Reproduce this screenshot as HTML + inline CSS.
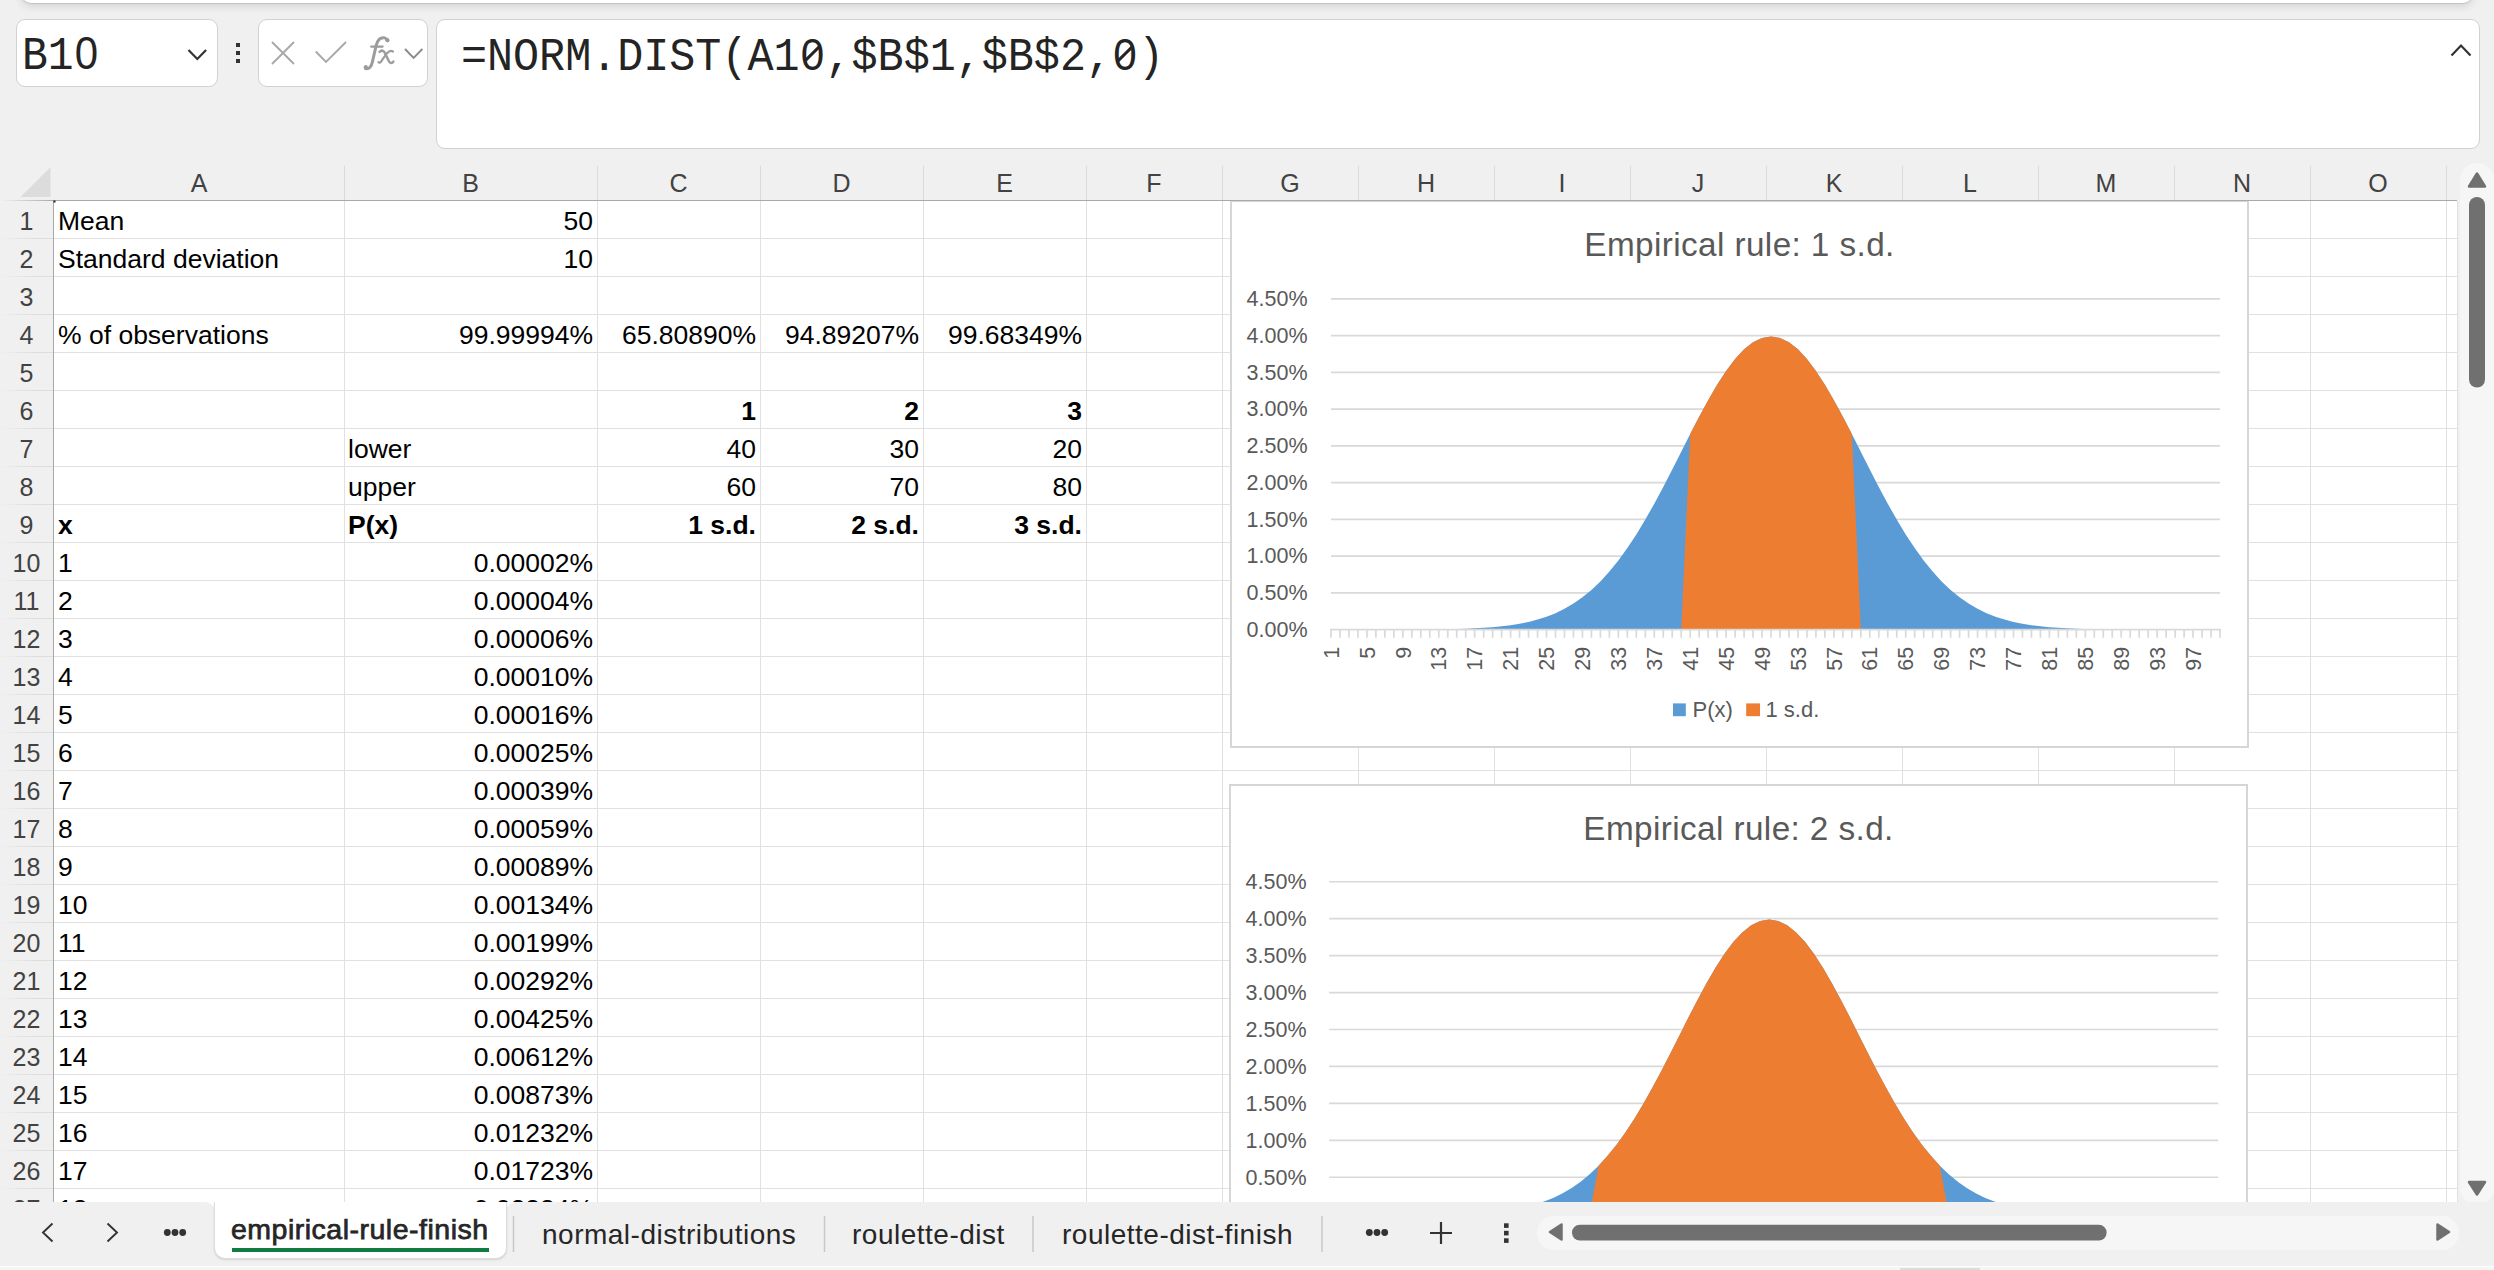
<!DOCTYPE html><html><head><meta charset="utf-8"><style>
*{margin:0;padding:0;box-sizing:border-box}
html,body{width:2494px;height:1270px;overflow:hidden;background:#f0f0f0}
body{position:relative;font-family:"Liberation Sans",sans-serif}
.a{position:absolute}
.c{position:absolute;font-size:26.5px;line-height:38px;height:38px;padding-top:1px;color:#000;white-space:nowrap}
.l{text-align:left}
.r{text-align:right}
.b{font-weight:bold}
.ch{position:absolute;top:158px;height:50px;line-height:50px;font-size:25px;color:#424242;text-align:center}
.rh{position:absolute;left:0;width:53px;height:38px;line-height:38px;padding-top:1px;font-size:25px;color:#424242;text-align:center}
.tab{position:absolute;top:1202px;height:56px;line-height:56px;font-size:28px;color:#262626;white-space:nowrap}
</style></head><body>

<div class="a" style="left:21px;top:-30px;width:2452px;height:32.6px;background:#fff;border-radius:10px;box-shadow:0 1px 1px #c4c4c4,0 3px 10px rgba(0,0,0,.13)"></div>
<div class="a" style="left:16px;top:19px;width:202px;height:68px;background:#fff;border:1px solid #d1d1d1;border-radius:9px"></div>
<div class="a" style="left:22px;top:26px;font-family:'Liberation Mono',monospace;font-size:43px;line-height:56px;color:#242424;transform:scaleY(1.08);transform-origin:0 50%">B1<span style="font-family:'Liberation Sans';font-size:42px;display:inline-block;width:25.8px;text-align:center">0</span></div>
<svg class="a" style="left:0;top:0" width="440" height="100"><path d="M188.5 50 L197.3 59 L206.1 50" fill="none" stroke="#333" stroke-width="2.2"/><rect x="236" y="43" width="4" height="4" fill="#333"/><rect x="236" y="51" width="4" height="4" fill="#333"/><rect x="236" y="59" width="4" height="4" fill="#333"/></svg>
<div class="a" style="left:258px;top:19px;width:170px;height:68px;background:#fff;border:1px solid #d1d1d1;border-radius:9px"></div>
<svg class="a" style="left:0;top:0" width="440" height="100"><path d="M272 42 L294 64 M294 42 L272 64" stroke="#a8a8a8" stroke-width="1.9" fill="none"/><path d="M315.8 51.5 L326 62 L346 42" stroke="#a8a8a8" stroke-width="1.9" fill="none"/><path d="M405 49 L413.6 58 L422.4 49" stroke="#8a8a8a" stroke-width="1.9" fill="none"/><g fill="none" stroke="#9c9c9c" stroke-linecap="round"><path d="M387.6 40.8 C386.8 37.6 383.2 36.9 380.2 38.6 C377.2 40.6 376.4 44 375.6 48 L372.2 62.6 C371.2 66.8 368.6 69.2 365.4 68.6" stroke-width="3"/><path d="M371.2 46.6 H382.6" stroke-width="2.3"/><path d="M379.6 51.8 C382 49.6 384 50.6 385.4 54 L388.8 61 C390.2 63.6 392 63.6 393.4 61.6" stroke-width="2.5"/><path d="M393 51.6 C391 50 389 51 387 53.2 L382 60.2 C380.6 62.6 379.6 63 378.4 62.2" stroke-width="2.2"/></g><circle cx="387.4" cy="40.2" r="2.1" fill="#9c9c9c"/><circle cx="365.8" cy="67.2" r="2.1" fill="#9c9c9c"/></svg>
<div class="a" style="left:436px;top:19px;width:2044px;height:130px;background:#fff;border:1px solid #d1d1d1;border-radius:9px"></div>
<div class="a" style="left:461px;top:26.5px;font-family:'Liberation Mono',monospace;font-size:43.4px;line-height:56px;color:#242424;white-space:pre;transform:scaleY(1.06);transform-origin:0 50%">=NORM.DIST(A1<span style="display:inline-block;width:26.04px;position:relative;text-align:center;font-family:'Liberation Sans';font-size:42.2px">0<span style="position:absolute;left:11.8px;top:15.5px;width:2.6px;height:21px;background:#242424;transform:rotate(47deg)"></span></span>,$B$1,$B$2,<span style="display:inline-block;width:26.04px;position:relative;text-align:center;font-family:'Liberation Sans';font-size:42.2px">0<span style="position:absolute;left:11.8px;top:15.5px;width:2.6px;height:21px;background:#242424;transform:rotate(47deg)"></span></span>)</div>
<svg class="a" style="left:2430px;top:30px" width="50" height="40"><path d="M21.5 25.5 L31 15.5 L40.5 25.5" fill="none" stroke="#333" stroke-width="2.2"/></svg>
<div class="a" style="left:54px;top:201px;width:2403px;height:1001px;background:#fff"></div>
<svg class="a" style="left:0;top:0" width="2494" height="1202"><line x1="54" y1="238.5" x2="2457" y2="238.5" stroke="#e1e1e1" stroke-width="1"/><line x1="54" y1="276.5" x2="2457" y2="276.5" stroke="#e1e1e1" stroke-width="1"/><line x1="54" y1="314.5" x2="2457" y2="314.5" stroke="#e1e1e1" stroke-width="1"/><line x1="54" y1="352.5" x2="2457" y2="352.5" stroke="#e1e1e1" stroke-width="1"/><line x1="54" y1="390.5" x2="2457" y2="390.5" stroke="#e1e1e1" stroke-width="1"/><line x1="54" y1="428.5" x2="2457" y2="428.5" stroke="#e1e1e1" stroke-width="1"/><line x1="54" y1="466.5" x2="2457" y2="466.5" stroke="#e1e1e1" stroke-width="1"/><line x1="54" y1="504.5" x2="2457" y2="504.5" stroke="#e1e1e1" stroke-width="1"/><line x1="54" y1="542.5" x2="2457" y2="542.5" stroke="#e1e1e1" stroke-width="1"/><line x1="54" y1="580.5" x2="2457" y2="580.5" stroke="#e1e1e1" stroke-width="1"/><line x1="54" y1="618.5" x2="2457" y2="618.5" stroke="#e1e1e1" stroke-width="1"/><line x1="54" y1="656.5" x2="2457" y2="656.5" stroke="#e1e1e1" stroke-width="1"/><line x1="54" y1="694.5" x2="2457" y2="694.5" stroke="#e1e1e1" stroke-width="1"/><line x1="54" y1="732.5" x2="2457" y2="732.5" stroke="#e1e1e1" stroke-width="1"/><line x1="54" y1="770.5" x2="2457" y2="770.5" stroke="#e1e1e1" stroke-width="1"/><line x1="54" y1="808.5" x2="2457" y2="808.5" stroke="#e1e1e1" stroke-width="1"/><line x1="54" y1="846.5" x2="2457" y2="846.5" stroke="#e1e1e1" stroke-width="1"/><line x1="54" y1="884.5" x2="2457" y2="884.5" stroke="#e1e1e1" stroke-width="1"/><line x1="54" y1="922.5" x2="2457" y2="922.5" stroke="#e1e1e1" stroke-width="1"/><line x1="54" y1="960.5" x2="2457" y2="960.5" stroke="#e1e1e1" stroke-width="1"/><line x1="54" y1="998.5" x2="2457" y2="998.5" stroke="#e1e1e1" stroke-width="1"/><line x1="54" y1="1036.5" x2="2457" y2="1036.5" stroke="#e1e1e1" stroke-width="1"/><line x1="54" y1="1074.5" x2="2457" y2="1074.5" stroke="#e1e1e1" stroke-width="1"/><line x1="54" y1="1112.5" x2="2457" y2="1112.5" stroke="#e1e1e1" stroke-width="1"/><line x1="54" y1="1150.5" x2="2457" y2="1150.5" stroke="#e1e1e1" stroke-width="1"/><line x1="54" y1="1188.5" x2="2457" y2="1188.5" stroke="#e1e1e1" stroke-width="1"/><line x1="54" y1="1226.5" x2="2457" y2="1226.5" stroke="#e1e1e1" stroke-width="1"/><line x1="344.5" y1="201" x2="344.5" y2="1202" stroke="#e1e1e1" stroke-width="1"/><line x1="597.5" y1="201" x2="597.5" y2="1202" stroke="#e1e1e1" stroke-width="1"/><line x1="760.5" y1="201" x2="760.5" y2="1202" stroke="#e1e1e1" stroke-width="1"/><line x1="923.5" y1="201" x2="923.5" y2="1202" stroke="#e1e1e1" stroke-width="1"/><line x1="1086.5" y1="201" x2="1086.5" y2="1202" stroke="#e1e1e1" stroke-width="1"/><line x1="1222.5" y1="201" x2="1222.5" y2="1202" stroke="#e1e1e1" stroke-width="1"/><line x1="1358.5" y1="201" x2="1358.5" y2="1202" stroke="#e1e1e1" stroke-width="1"/><line x1="1494.5" y1="201" x2="1494.5" y2="1202" stroke="#e1e1e1" stroke-width="1"/><line x1="1630.5" y1="201" x2="1630.5" y2="1202" stroke="#e1e1e1" stroke-width="1"/><line x1="1766.5" y1="201" x2="1766.5" y2="1202" stroke="#e1e1e1" stroke-width="1"/><line x1="1902.5" y1="201" x2="1902.5" y2="1202" stroke="#e1e1e1" stroke-width="1"/><line x1="2038.5" y1="201" x2="2038.5" y2="1202" stroke="#e1e1e1" stroke-width="1"/><line x1="2174.5" y1="201" x2="2174.5" y2="1202" stroke="#e1e1e1" stroke-width="1"/><line x1="2310.5" y1="201" x2="2310.5" y2="1202" stroke="#e1e1e1" stroke-width="1"/><line x1="2446.5" y1="201" x2="2446.5" y2="1202" stroke="#e1e1e1" stroke-width="1"/><rect x="2457" y="201" width="1" height="1001" fill="#e1e1e1"/></svg>
<div class="c l" style="left:58px;top:201px">Mean</div>
<div class="c r" style="left:344px;width:249px;top:201px">50</div>
<div class="c l" style="left:58px;top:239px">Standard deviation</div>
<div class="c r" style="left:344px;width:249px;top:239px">10</div>
<div class="c l" style="left:58px;top:315px">% of observations</div>
<div class="c r" style="left:344px;width:249px;top:315px">99.99994%</div>
<div class="c r" style="left:597px;width:159px;top:315px">65.80890%</div>
<div class="c r" style="left:760px;width:159px;top:315px">94.89207%</div>
<div class="c r" style="left:923px;width:159px;top:315px">99.68349%</div>
<div class="c r b" style="left:597px;width:159px;top:391px">1</div>
<div class="c r b" style="left:760px;width:159px;top:391px">2</div>
<div class="c r b" style="left:923px;width:159px;top:391px">3</div>
<div class="c l" style="left:348px;top:429px">lower</div>
<div class="c r" style="left:597px;width:159px;top:429px">40</div>
<div class="c r" style="left:760px;width:159px;top:429px">30</div>
<div class="c r" style="left:923px;width:159px;top:429px">20</div>
<div class="c l" style="left:348px;top:467px">upper</div>
<div class="c r" style="left:597px;width:159px;top:467px">60</div>
<div class="c r" style="left:760px;width:159px;top:467px">70</div>
<div class="c r" style="left:923px;width:159px;top:467px">80</div>
<div class="c l b" style="left:58px;top:505px">x</div>
<div class="c l b" style="left:348px;top:505px">P(x)</div>
<div class="c r b" style="left:597px;width:159px;top:505px">1 s.d.</div>
<div class="c r b" style="left:760px;width:159px;top:505px">2 s.d.</div>
<div class="c r b" style="left:923px;width:159px;top:505px">3 s.d.</div>
<div class="c l" style="left:58px;top:543px">1</div>
<div class="c r" style="left:344px;width:249px;top:543px">0.00002%</div>
<div class="c l" style="left:58px;top:581px">2</div>
<div class="c r" style="left:344px;width:249px;top:581px">0.00004%</div>
<div class="c l" style="left:58px;top:619px">3</div>
<div class="c r" style="left:344px;width:249px;top:619px">0.00006%</div>
<div class="c l" style="left:58px;top:657px">4</div>
<div class="c r" style="left:344px;width:249px;top:657px">0.00010%</div>
<div class="c l" style="left:58px;top:695px">5</div>
<div class="c r" style="left:344px;width:249px;top:695px">0.00016%</div>
<div class="c l" style="left:58px;top:733px">6</div>
<div class="c r" style="left:344px;width:249px;top:733px">0.00025%</div>
<div class="c l" style="left:58px;top:771px">7</div>
<div class="c r" style="left:344px;width:249px;top:771px">0.00039%</div>
<div class="c l" style="left:58px;top:809px">8</div>
<div class="c r" style="left:344px;width:249px;top:809px">0.00059%</div>
<div class="c l" style="left:58px;top:847px">9</div>
<div class="c r" style="left:344px;width:249px;top:847px">0.00089%</div>
<div class="c l" style="left:58px;top:885px">10</div>
<div class="c r" style="left:344px;width:249px;top:885px">0.00134%</div>
<div class="c l" style="left:58px;top:923px">11</div>
<div class="c r" style="left:344px;width:249px;top:923px">0.00199%</div>
<div class="c l" style="left:58px;top:961px">12</div>
<div class="c r" style="left:344px;width:249px;top:961px">0.00292%</div>
<div class="c l" style="left:58px;top:999px">13</div>
<div class="c r" style="left:344px;width:249px;top:999px">0.00425%</div>
<div class="c l" style="left:58px;top:1037px">14</div>
<div class="c r" style="left:344px;width:249px;top:1037px">0.00612%</div>
<div class="c l" style="left:58px;top:1075px">15</div>
<div class="c r" style="left:344px;width:249px;top:1075px">0.00873%</div>
<div class="c l" style="left:58px;top:1113px">16</div>
<div class="c r" style="left:344px;width:249px;top:1113px">0.01232%</div>
<div class="c l" style="left:58px;top:1151px">17</div>
<div class="c r" style="left:344px;width:249px;top:1151px">0.01723%</div>
<div class="c l" style="left:58px;top:1189px">18</div>
<div class="c r" style="left:344px;width:249px;top:1189px">0.02384%</div>
<svg class="a" style="left:1230px;top:200px" width="1019" height="548" viewBox="1230 200 1019 548"><rect x="1231" y="201" width="1017" height="546" fill="#fff" stroke="#d6d6d6" stroke-width="2"/><line x1="1331" y1="592.86" x2="2220.0" y2="592.86" stroke="#d9d9d9" stroke-width="1.7"/><line x1="1331" y1="556.12" x2="2220.0" y2="556.12" stroke="#d9d9d9" stroke-width="1.7"/><line x1="1331" y1="519.38" x2="2220.0" y2="519.38" stroke="#d9d9d9" stroke-width="1.7"/><line x1="1331" y1="482.64" x2="2220.0" y2="482.64" stroke="#d9d9d9" stroke-width="1.7"/><line x1="1331" y1="445.90" x2="2220.0" y2="445.90" stroke="#d9d9d9" stroke-width="1.7"/><line x1="1331" y1="409.16" x2="2220.0" y2="409.16" stroke="#d9d9d9" stroke-width="1.7"/><line x1="1331" y1="372.42" x2="2220.0" y2="372.42" stroke="#d9d9d9" stroke-width="1.7"/><line x1="1331" y1="335.68" x2="2220.0" y2="335.68" stroke="#d9d9d9" stroke-width="1.7"/><line x1="1331" y1="298.94" x2="2220.0" y2="298.94" stroke="#d9d9d9" stroke-width="1.7"/><text x="1307.5" y="636.8" text-anchor="end" font-family="Liberation Sans" font-size="21.5" fill="#595959">0.00%</text><text x="1307.5" y="600.1" text-anchor="end" font-family="Liberation Sans" font-size="21.5" fill="#595959">0.50%</text><text x="1307.5" y="563.3" text-anchor="end" font-family="Liberation Sans" font-size="21.5" fill="#595959">1.00%</text><text x="1307.5" y="526.6" text-anchor="end" font-family="Liberation Sans" font-size="21.5" fill="#595959">1.50%</text><text x="1307.5" y="489.8" text-anchor="end" font-family="Liberation Sans" font-size="21.5" fill="#595959">2.00%</text><text x="1307.5" y="453.1" text-anchor="end" font-family="Liberation Sans" font-size="21.5" fill="#595959">2.50%</text><text x="1307.5" y="416.4" text-anchor="end" font-family="Liberation Sans" font-size="21.5" fill="#595959">3.00%</text><text x="1307.5" y="379.6" text-anchor="end" font-family="Liberation Sans" font-size="21.5" fill="#595959">3.50%</text><text x="1307.5" y="342.9" text-anchor="end" font-family="Liberation Sans" font-size="21.5" fill="#595959">4.00%</text><text x="1307.5" y="306.1" text-anchor="end" font-family="Liberation Sans" font-size="21.5" fill="#595959">4.50%</text><polygon points="1331.00,629.6 1331.00,629.60 1339.98,629.60 1348.96,629.60 1357.94,629.59 1366.92,629.59 1375.90,629.58 1384.88,629.57 1393.86,629.56 1402.84,629.53 1411.82,629.50 1420.80,629.45 1429.78,629.39 1438.76,629.29 1447.74,629.15 1456.72,628.96 1465.70,628.69 1474.68,628.33 1483.66,627.85 1492.64,627.20 1501.62,626.34 1510.60,625.23 1519.58,623.78 1528.56,621.94 1537.54,619.62 1546.52,616.72 1555.50,613.14 1564.48,608.79 1573.46,603.53 1582.44,597.28 1591.42,589.93 1600.40,581.39 1609.38,571.59 1618.36,560.49 1627.34,548.10 1636.32,534.43 1645.30,519.58 1654.28,503.68 1663.26,486.91 1672.24,469.52 1681.22,451.80 1690.20,434.08 1699.18,416.73 1708.16,400.16 1717.14,384.75 1726.12,370.90 1735.10,359.00 1744.08,349.36 1753.06,342.26 1762.04,337.92 1771.02,336.46 1780.00,337.92 1788.98,342.26 1797.96,349.36 1806.94,359.00 1815.92,370.90 1824.90,384.75 1833.88,400.16 1842.86,416.73 1851.84,434.08 1860.82,451.80 1869.80,469.52 1878.78,486.91 1887.76,503.68 1896.74,519.58 1905.72,534.43 1914.70,548.10 1923.68,560.49 1932.66,571.59 1941.64,581.39 1950.62,589.93 1959.60,597.28 1968.58,603.53 1977.56,608.79 1986.54,613.14 1995.52,616.72 2004.50,619.62 2013.48,621.94 2022.46,623.78 2031.44,625.23 2040.42,626.34 2049.40,627.20 2058.38,627.85 2067.36,628.33 2076.34,628.69 2085.32,628.96 2094.30,629.15 2103.28,629.29 2112.26,629.39 2121.24,629.45 2130.22,629.50 2139.20,629.53 2148.18,629.56 2157.16,629.57 2166.14,629.58 2175.12,629.59 2184.10,629.59 2193.08,629.60 2202.06,629.60 2211.04,629.60 2220.02,629.60 2220.02,629.6" fill="#5b9bd5"/><polygon points="1331.00,629.6 1331.00,629.60 1339.98,629.60 1348.96,629.60 1357.94,629.60 1366.92,629.60 1375.90,629.60 1384.88,629.60 1393.86,629.60 1402.84,629.60 1411.82,629.60 1420.80,629.60 1429.78,629.60 1438.76,629.60 1447.74,629.60 1456.72,629.60 1465.70,629.60 1474.68,629.60 1483.66,629.60 1492.64,629.60 1501.62,629.60 1510.60,629.60 1519.58,629.60 1528.56,629.60 1537.54,629.60 1546.52,629.60 1555.50,629.60 1564.48,629.60 1573.46,629.60 1582.44,629.60 1591.42,629.60 1600.40,629.60 1609.38,629.60 1618.36,629.60 1627.34,629.60 1636.32,629.60 1645.30,629.60 1654.28,629.60 1663.26,629.60 1672.24,629.60 1681.22,629.60 1690.20,434.08 1699.18,416.73 1708.16,400.16 1717.14,384.75 1726.12,370.90 1735.10,359.00 1744.08,349.36 1753.06,342.26 1762.04,337.92 1771.02,336.46 1780.00,337.92 1788.98,342.26 1797.96,349.36 1806.94,359.00 1815.92,370.90 1824.90,384.75 1833.88,400.16 1842.86,416.73 1851.84,434.08 1860.82,629.60 1869.80,629.60 1878.78,629.60 1887.76,629.60 1896.74,629.60 1905.72,629.60 1914.70,629.60 1923.68,629.60 1932.66,629.60 1941.64,629.60 1950.62,629.60 1959.60,629.60 1968.58,629.60 1977.56,629.60 1986.54,629.60 1995.52,629.60 2004.50,629.60 2013.48,629.60 2022.46,629.60 2031.44,629.60 2040.42,629.60 2049.40,629.60 2058.38,629.60 2067.36,629.60 2076.34,629.60 2085.32,629.60 2094.30,629.60 2103.28,629.60 2112.26,629.60 2121.24,629.60 2130.22,629.60 2139.20,629.60 2148.18,629.60 2157.16,629.60 2166.14,629.60 2175.12,629.60 2184.10,629.60 2193.08,629.60 2202.06,629.60 2211.04,629.60 2220.02,629.60 2220.02,629.6" fill="#ed7d31"/><line x1="1330" y1="629.6" x2="2221.0" y2="629.6" stroke="#d9d9d9" stroke-width="1.8"/><path d="M1331.00 629.6 V637.8M1339.98 629.6 V637.8M1348.96 629.6 V637.8M1357.94 629.6 V637.8M1366.92 629.6 V637.8M1375.90 629.6 V637.8M1384.88 629.6 V637.8M1393.86 629.6 V637.8M1402.84 629.6 V637.8M1411.82 629.6 V637.8M1420.80 629.6 V637.8M1429.78 629.6 V637.8M1438.76 629.6 V637.8M1447.74 629.6 V637.8M1456.72 629.6 V637.8M1465.70 629.6 V637.8M1474.68 629.6 V637.8M1483.66 629.6 V637.8M1492.64 629.6 V637.8M1501.62 629.6 V637.8M1510.60 629.6 V637.8M1519.58 629.6 V637.8M1528.56 629.6 V637.8M1537.54 629.6 V637.8M1546.52 629.6 V637.8M1555.50 629.6 V637.8M1564.48 629.6 V637.8M1573.46 629.6 V637.8M1582.44 629.6 V637.8M1591.42 629.6 V637.8M1600.40 629.6 V637.8M1609.38 629.6 V637.8M1618.36 629.6 V637.8M1627.34 629.6 V637.8M1636.32 629.6 V637.8M1645.30 629.6 V637.8M1654.28 629.6 V637.8M1663.26 629.6 V637.8M1672.24 629.6 V637.8M1681.22 629.6 V637.8M1690.20 629.6 V637.8M1699.18 629.6 V637.8M1708.16 629.6 V637.8M1717.14 629.6 V637.8M1726.12 629.6 V637.8M1735.10 629.6 V637.8M1744.08 629.6 V637.8M1753.06 629.6 V637.8M1762.04 629.6 V637.8M1771.02 629.6 V637.8M1780.00 629.6 V637.8M1788.98 629.6 V637.8M1797.96 629.6 V637.8M1806.94 629.6 V637.8M1815.92 629.6 V637.8M1824.90 629.6 V637.8M1833.88 629.6 V637.8M1842.86 629.6 V637.8M1851.84 629.6 V637.8M1860.82 629.6 V637.8M1869.80 629.6 V637.8M1878.78 629.6 V637.8M1887.76 629.6 V637.8M1896.74 629.6 V637.8M1905.72 629.6 V637.8M1914.70 629.6 V637.8M1923.68 629.6 V637.8M1932.66 629.6 V637.8M1941.64 629.6 V637.8M1950.62 629.6 V637.8M1959.60 629.6 V637.8M1968.58 629.6 V637.8M1977.56 629.6 V637.8M1986.54 629.6 V637.8M1995.52 629.6 V637.8M2004.50 629.6 V637.8M2013.48 629.6 V637.8M2022.46 629.6 V637.8M2031.44 629.6 V637.8M2040.42 629.6 V637.8M2049.40 629.6 V637.8M2058.38 629.6 V637.8M2067.36 629.6 V637.8M2076.34 629.6 V637.8M2085.32 629.6 V637.8M2094.30 629.6 V637.8M2103.28 629.6 V637.8M2112.26 629.6 V637.8M2121.24 629.6 V637.8M2130.22 629.6 V637.8M2139.20 629.6 V637.8M2148.18 629.6 V637.8M2157.16 629.6 V637.8M2166.14 629.6 V637.8M2175.12 629.6 V637.8M2184.10 629.6 V637.8M2193.08 629.6 V637.8M2202.06 629.6 V637.8M2211.04 629.6 V637.8M2220.02 629.6 V637.8" stroke="#d9d9d9" stroke-width="1.7"/><text x="1338.70" y="646.8" transform="rotate(-90 1338.70 646.8)" text-anchor="end" font-family="Liberation Sans" font-size="21.5" fill="#595959">1</text><text x="1374.62" y="646.8" transform="rotate(-90 1374.62 646.8)" text-anchor="end" font-family="Liberation Sans" font-size="21.5" fill="#595959">5</text><text x="1410.54" y="646.8" transform="rotate(-90 1410.54 646.8)" text-anchor="end" font-family="Liberation Sans" font-size="21.5" fill="#595959">9</text><text x="1446.46" y="646.8" transform="rotate(-90 1446.46 646.8)" text-anchor="end" font-family="Liberation Sans" font-size="21.5" fill="#595959">13</text><text x="1482.38" y="646.8" transform="rotate(-90 1482.38 646.8)" text-anchor="end" font-family="Liberation Sans" font-size="21.5" fill="#595959">17</text><text x="1518.30" y="646.8" transform="rotate(-90 1518.30 646.8)" text-anchor="end" font-family="Liberation Sans" font-size="21.5" fill="#595959">21</text><text x="1554.22" y="646.8" transform="rotate(-90 1554.22 646.8)" text-anchor="end" font-family="Liberation Sans" font-size="21.5" fill="#595959">25</text><text x="1590.14" y="646.8" transform="rotate(-90 1590.14 646.8)" text-anchor="end" font-family="Liberation Sans" font-size="21.5" fill="#595959">29</text><text x="1626.06" y="646.8" transform="rotate(-90 1626.06 646.8)" text-anchor="end" font-family="Liberation Sans" font-size="21.5" fill="#595959">33</text><text x="1661.98" y="646.8" transform="rotate(-90 1661.98 646.8)" text-anchor="end" font-family="Liberation Sans" font-size="21.5" fill="#595959">37</text><text x="1697.90" y="646.8" transform="rotate(-90 1697.90 646.8)" text-anchor="end" font-family="Liberation Sans" font-size="21.5" fill="#595959">41</text><text x="1733.82" y="646.8" transform="rotate(-90 1733.82 646.8)" text-anchor="end" font-family="Liberation Sans" font-size="21.5" fill="#595959">45</text><text x="1769.74" y="646.8" transform="rotate(-90 1769.74 646.8)" text-anchor="end" font-family="Liberation Sans" font-size="21.5" fill="#595959">49</text><text x="1805.66" y="646.8" transform="rotate(-90 1805.66 646.8)" text-anchor="end" font-family="Liberation Sans" font-size="21.5" fill="#595959">53</text><text x="1841.58" y="646.8" transform="rotate(-90 1841.58 646.8)" text-anchor="end" font-family="Liberation Sans" font-size="21.5" fill="#595959">57</text><text x="1877.50" y="646.8" transform="rotate(-90 1877.50 646.8)" text-anchor="end" font-family="Liberation Sans" font-size="21.5" fill="#595959">61</text><text x="1913.42" y="646.8" transform="rotate(-90 1913.42 646.8)" text-anchor="end" font-family="Liberation Sans" font-size="21.5" fill="#595959">65</text><text x="1949.34" y="646.8" transform="rotate(-90 1949.34 646.8)" text-anchor="end" font-family="Liberation Sans" font-size="21.5" fill="#595959">69</text><text x="1985.26" y="646.8" transform="rotate(-90 1985.26 646.8)" text-anchor="end" font-family="Liberation Sans" font-size="21.5" fill="#595959">73</text><text x="2021.18" y="646.8" transform="rotate(-90 2021.18 646.8)" text-anchor="end" font-family="Liberation Sans" font-size="21.5" fill="#595959">77</text><text x="2057.10" y="646.8" transform="rotate(-90 2057.10 646.8)" text-anchor="end" font-family="Liberation Sans" font-size="21.5" fill="#595959">81</text><text x="2093.02" y="646.8" transform="rotate(-90 2093.02 646.8)" text-anchor="end" font-family="Liberation Sans" font-size="21.5" fill="#595959">85</text><text x="2128.94" y="646.8" transform="rotate(-90 2128.94 646.8)" text-anchor="end" font-family="Liberation Sans" font-size="21.5" fill="#595959">89</text><text x="2164.86" y="646.8" transform="rotate(-90 2164.86 646.8)" text-anchor="end" font-family="Liberation Sans" font-size="21.5" fill="#595959">93</text><text x="2200.78" y="646.8" transform="rotate(-90 2200.78 646.8)" text-anchor="end" font-family="Liberation Sans" font-size="21.5" fill="#595959">97</text><text x="1739.5" y="256.3" text-anchor="middle" font-family="Liberation Sans" font-size="33.3" letter-spacing="0.4" fill="#595959">Empirical rule: 1 s.d.</text><rect x="1673" y="703.4" width="12.8" height="12.8" fill="#5b9bd5"/><text x="1692.5" y="716.8" font-family="Liberation Sans" font-size="22" fill="#595959">P(x)</text><rect x="1746.2" y="703.4" width="13.8" height="12.8" fill="#ed7d31"/><text x="1765.5" y="716.8" font-family="Liberation Sans" font-size="22" fill="#595959">1 s.d.</text></svg>
<svg class="a" style="left:1229px;top:784px" width="1019" height="548" viewBox="1229 784 1019 548"><rect x="1230" y="785" width="1017" height="546" fill="#fff" stroke="#d6d6d6" stroke-width="2"/><line x1="1329.2" y1="1177.26" x2="2218.2" y2="1177.26" stroke="#d9d9d9" stroke-width="1.7"/><line x1="1329.2" y1="1140.32" x2="2218.2" y2="1140.32" stroke="#d9d9d9" stroke-width="1.7"/><line x1="1329.2" y1="1103.38" x2="2218.2" y2="1103.38" stroke="#d9d9d9" stroke-width="1.7"/><line x1="1329.2" y1="1066.44" x2="2218.2" y2="1066.44" stroke="#d9d9d9" stroke-width="1.7"/><line x1="1329.2" y1="1029.50" x2="2218.2" y2="1029.50" stroke="#d9d9d9" stroke-width="1.7"/><line x1="1329.2" y1="992.56" x2="2218.2" y2="992.56" stroke="#d9d9d9" stroke-width="1.7"/><line x1="1329.2" y1="955.62" x2="2218.2" y2="955.62" stroke="#d9d9d9" stroke-width="1.7"/><line x1="1329.2" y1="918.68" x2="2218.2" y2="918.68" stroke="#d9d9d9" stroke-width="1.7"/><line x1="1329.2" y1="881.74" x2="2218.2" y2="881.74" stroke="#d9d9d9" stroke-width="1.7"/><text x="1306.5" y="1221.4" text-anchor="end" font-family="Liberation Sans" font-size="21.5" fill="#595959">0.00%</text><text x="1306.5" y="1184.5" text-anchor="end" font-family="Liberation Sans" font-size="21.5" fill="#595959">0.50%</text><text x="1306.5" y="1147.5" text-anchor="end" font-family="Liberation Sans" font-size="21.5" fill="#595959">1.00%</text><text x="1306.5" y="1110.6" text-anchor="end" font-family="Liberation Sans" font-size="21.5" fill="#595959">1.50%</text><text x="1306.5" y="1073.6" text-anchor="end" font-family="Liberation Sans" font-size="21.5" fill="#595959">2.00%</text><text x="1306.5" y="1036.7" text-anchor="end" font-family="Liberation Sans" font-size="21.5" fill="#595959">2.50%</text><text x="1306.5" y="999.8" text-anchor="end" font-family="Liberation Sans" font-size="21.5" fill="#595959">3.00%</text><text x="1306.5" y="962.8" text-anchor="end" font-family="Liberation Sans" font-size="21.5" fill="#595959">3.50%</text><text x="1306.5" y="925.9" text-anchor="end" font-family="Liberation Sans" font-size="21.5" fill="#595959">4.00%</text><text x="1306.5" y="888.9" text-anchor="end" font-family="Liberation Sans" font-size="21.5" fill="#595959">4.50%</text><polygon points="1329.20,1214.2 1329.20,1214.20 1338.18,1214.20 1347.16,1214.20 1356.14,1214.19 1365.12,1214.19 1374.10,1214.18 1383.08,1214.17 1392.06,1214.16 1401.04,1214.13 1410.02,1214.10 1419.00,1214.05 1427.98,1213.98 1436.96,1213.89 1445.94,1213.75 1454.92,1213.56 1463.90,1213.29 1472.88,1212.93 1481.86,1212.44 1490.84,1211.79 1499.82,1210.93 1508.80,1209.80 1517.78,1208.35 1526.76,1206.50 1535.74,1204.16 1544.72,1201.25 1553.70,1197.65 1562.68,1193.27 1571.66,1187.99 1580.64,1181.70 1589.62,1174.31 1598.60,1165.72 1607.58,1155.87 1616.56,1144.72 1625.54,1132.25 1634.52,1118.51 1643.50,1103.58 1652.48,1087.59 1661.46,1070.74 1670.44,1053.25 1679.42,1035.43 1688.40,1017.62 1697.38,1000.18 1706.36,983.51 1715.34,968.01 1724.32,954.09 1733.30,942.12 1742.28,932.43 1751.26,925.30 1760.24,920.93 1769.22,919.46 1778.20,920.93 1787.18,925.30 1796.16,932.43 1805.14,942.12 1814.12,954.09 1823.10,968.01 1832.08,983.51 1841.06,1000.18 1850.04,1017.62 1859.02,1035.43 1868.00,1053.25 1876.98,1070.74 1885.96,1087.59 1894.94,1103.58 1903.92,1118.51 1912.90,1132.25 1921.88,1144.72 1930.86,1155.87 1939.84,1165.72 1948.82,1174.31 1957.80,1181.70 1966.78,1187.99 1975.76,1193.27 1984.74,1197.65 1993.72,1201.25 2002.70,1204.16 2011.68,1206.50 2020.66,1208.35 2029.64,1209.80 2038.62,1210.93 2047.60,1211.79 2056.58,1212.44 2065.56,1212.93 2074.54,1213.29 2083.52,1213.56 2092.50,1213.75 2101.48,1213.89 2110.46,1213.98 2119.44,1214.05 2128.42,1214.10 2137.40,1214.13 2146.38,1214.16 2155.36,1214.17 2164.34,1214.18 2173.32,1214.19 2182.30,1214.19 2191.28,1214.20 2200.26,1214.20 2209.24,1214.20 2218.22,1214.20 2218.22,1214.2" fill="#5b9bd5"/><polygon points="1329.20,1214.2 1329.20,1214.20 1338.18,1214.20 1347.16,1214.20 1356.14,1214.20 1365.12,1214.20 1374.10,1214.20 1383.08,1214.20 1392.06,1214.20 1401.04,1214.20 1410.02,1214.20 1419.00,1214.20 1427.98,1214.20 1436.96,1214.20 1445.94,1214.20 1454.92,1214.20 1463.90,1214.20 1472.88,1214.20 1481.86,1214.20 1490.84,1214.20 1499.82,1214.20 1508.80,1214.20 1517.78,1214.20 1526.76,1214.20 1535.74,1214.20 1544.72,1214.20 1553.70,1214.20 1562.68,1214.20 1571.66,1214.20 1580.64,1214.20 1589.62,1214.20 1598.60,1165.72 1607.58,1155.87 1616.56,1144.72 1625.54,1132.25 1634.52,1118.51 1643.50,1103.58 1652.48,1087.59 1661.46,1070.74 1670.44,1053.25 1679.42,1035.43 1688.40,1017.62 1697.38,1000.18 1706.36,983.51 1715.34,968.01 1724.32,954.09 1733.30,942.12 1742.28,932.43 1751.26,925.30 1760.24,920.93 1769.22,919.46 1778.20,920.93 1787.18,925.30 1796.16,932.43 1805.14,942.12 1814.12,954.09 1823.10,968.01 1832.08,983.51 1841.06,1000.18 1850.04,1017.62 1859.02,1035.43 1868.00,1053.25 1876.98,1070.74 1885.96,1087.59 1894.94,1103.58 1903.92,1118.51 1912.90,1132.25 1921.88,1144.72 1930.86,1155.87 1939.84,1165.72 1948.82,1214.20 1957.80,1214.20 1966.78,1214.20 1975.76,1214.20 1984.74,1214.20 1993.72,1214.20 2002.70,1214.20 2011.68,1214.20 2020.66,1214.20 2029.64,1214.20 2038.62,1214.20 2047.60,1214.20 2056.58,1214.20 2065.56,1214.20 2074.54,1214.20 2083.52,1214.20 2092.50,1214.20 2101.48,1214.20 2110.46,1214.20 2119.44,1214.20 2128.42,1214.20 2137.40,1214.20 2146.38,1214.20 2155.36,1214.20 2164.34,1214.20 2173.32,1214.20 2182.30,1214.20 2191.28,1214.20 2200.26,1214.20 2209.24,1214.20 2218.22,1214.20 2218.22,1214.2" fill="#ed7d31"/><line x1="1328.2" y1="1214.2" x2="2219.2" y2="1214.2" stroke="#d9d9d9" stroke-width="1.8"/><path d="M1329.20 1214.2 V1222.4M1338.18 1214.2 V1222.4M1347.16 1214.2 V1222.4M1356.14 1214.2 V1222.4M1365.12 1214.2 V1222.4M1374.10 1214.2 V1222.4M1383.08 1214.2 V1222.4M1392.06 1214.2 V1222.4M1401.04 1214.2 V1222.4M1410.02 1214.2 V1222.4M1419.00 1214.2 V1222.4M1427.98 1214.2 V1222.4M1436.96 1214.2 V1222.4M1445.94 1214.2 V1222.4M1454.92 1214.2 V1222.4M1463.90 1214.2 V1222.4M1472.88 1214.2 V1222.4M1481.86 1214.2 V1222.4M1490.84 1214.2 V1222.4M1499.82 1214.2 V1222.4M1508.80 1214.2 V1222.4M1517.78 1214.2 V1222.4M1526.76 1214.2 V1222.4M1535.74 1214.2 V1222.4M1544.72 1214.2 V1222.4M1553.70 1214.2 V1222.4M1562.68 1214.2 V1222.4M1571.66 1214.2 V1222.4M1580.64 1214.2 V1222.4M1589.62 1214.2 V1222.4M1598.60 1214.2 V1222.4M1607.58 1214.2 V1222.4M1616.56 1214.2 V1222.4M1625.54 1214.2 V1222.4M1634.52 1214.2 V1222.4M1643.50 1214.2 V1222.4M1652.48 1214.2 V1222.4M1661.46 1214.2 V1222.4M1670.44 1214.2 V1222.4M1679.42 1214.2 V1222.4M1688.40 1214.2 V1222.4M1697.38 1214.2 V1222.4M1706.36 1214.2 V1222.4M1715.34 1214.2 V1222.4M1724.32 1214.2 V1222.4M1733.30 1214.2 V1222.4M1742.28 1214.2 V1222.4M1751.26 1214.2 V1222.4M1760.24 1214.2 V1222.4M1769.22 1214.2 V1222.4M1778.20 1214.2 V1222.4M1787.18 1214.2 V1222.4M1796.16 1214.2 V1222.4M1805.14 1214.2 V1222.4M1814.12 1214.2 V1222.4M1823.10 1214.2 V1222.4M1832.08 1214.2 V1222.4M1841.06 1214.2 V1222.4M1850.04 1214.2 V1222.4M1859.02 1214.2 V1222.4M1868.00 1214.2 V1222.4M1876.98 1214.2 V1222.4M1885.96 1214.2 V1222.4M1894.94 1214.2 V1222.4M1903.92 1214.2 V1222.4M1912.90 1214.2 V1222.4M1921.88 1214.2 V1222.4M1930.86 1214.2 V1222.4M1939.84 1214.2 V1222.4M1948.82 1214.2 V1222.4M1957.80 1214.2 V1222.4M1966.78 1214.2 V1222.4M1975.76 1214.2 V1222.4M1984.74 1214.2 V1222.4M1993.72 1214.2 V1222.4M2002.70 1214.2 V1222.4M2011.68 1214.2 V1222.4M2020.66 1214.2 V1222.4M2029.64 1214.2 V1222.4M2038.62 1214.2 V1222.4M2047.60 1214.2 V1222.4M2056.58 1214.2 V1222.4M2065.56 1214.2 V1222.4M2074.54 1214.2 V1222.4M2083.52 1214.2 V1222.4M2092.50 1214.2 V1222.4M2101.48 1214.2 V1222.4M2110.46 1214.2 V1222.4M2119.44 1214.2 V1222.4M2128.42 1214.2 V1222.4M2137.40 1214.2 V1222.4M2146.38 1214.2 V1222.4M2155.36 1214.2 V1222.4M2164.34 1214.2 V1222.4M2173.32 1214.2 V1222.4M2182.30 1214.2 V1222.4M2191.28 1214.2 V1222.4M2200.26 1214.2 V1222.4M2209.24 1214.2 V1222.4M2218.22 1214.2 V1222.4" stroke="#d9d9d9" stroke-width="1.7"/><text x="1336.90" y="1231.4" transform="rotate(-90 1336.90 1231.4)" text-anchor="end" font-family="Liberation Sans" font-size="21.5" fill="#595959">1</text><text x="1372.82" y="1231.4" transform="rotate(-90 1372.82 1231.4)" text-anchor="end" font-family="Liberation Sans" font-size="21.5" fill="#595959">5</text><text x="1408.74" y="1231.4" transform="rotate(-90 1408.74 1231.4)" text-anchor="end" font-family="Liberation Sans" font-size="21.5" fill="#595959">9</text><text x="1444.66" y="1231.4" transform="rotate(-90 1444.66 1231.4)" text-anchor="end" font-family="Liberation Sans" font-size="21.5" fill="#595959">13</text><text x="1480.58" y="1231.4" transform="rotate(-90 1480.58 1231.4)" text-anchor="end" font-family="Liberation Sans" font-size="21.5" fill="#595959">17</text><text x="1516.50" y="1231.4" transform="rotate(-90 1516.50 1231.4)" text-anchor="end" font-family="Liberation Sans" font-size="21.5" fill="#595959">21</text><text x="1552.42" y="1231.4" transform="rotate(-90 1552.42 1231.4)" text-anchor="end" font-family="Liberation Sans" font-size="21.5" fill="#595959">25</text><text x="1588.34" y="1231.4" transform="rotate(-90 1588.34 1231.4)" text-anchor="end" font-family="Liberation Sans" font-size="21.5" fill="#595959">29</text><text x="1624.26" y="1231.4" transform="rotate(-90 1624.26 1231.4)" text-anchor="end" font-family="Liberation Sans" font-size="21.5" fill="#595959">33</text><text x="1660.18" y="1231.4" transform="rotate(-90 1660.18 1231.4)" text-anchor="end" font-family="Liberation Sans" font-size="21.5" fill="#595959">37</text><text x="1696.10" y="1231.4" transform="rotate(-90 1696.10 1231.4)" text-anchor="end" font-family="Liberation Sans" font-size="21.5" fill="#595959">41</text><text x="1732.02" y="1231.4" transform="rotate(-90 1732.02 1231.4)" text-anchor="end" font-family="Liberation Sans" font-size="21.5" fill="#595959">45</text><text x="1767.94" y="1231.4" transform="rotate(-90 1767.94 1231.4)" text-anchor="end" font-family="Liberation Sans" font-size="21.5" fill="#595959">49</text><text x="1803.86" y="1231.4" transform="rotate(-90 1803.86 1231.4)" text-anchor="end" font-family="Liberation Sans" font-size="21.5" fill="#595959">53</text><text x="1839.78" y="1231.4" transform="rotate(-90 1839.78 1231.4)" text-anchor="end" font-family="Liberation Sans" font-size="21.5" fill="#595959">57</text><text x="1875.70" y="1231.4" transform="rotate(-90 1875.70 1231.4)" text-anchor="end" font-family="Liberation Sans" font-size="21.5" fill="#595959">61</text><text x="1911.62" y="1231.4" transform="rotate(-90 1911.62 1231.4)" text-anchor="end" font-family="Liberation Sans" font-size="21.5" fill="#595959">65</text><text x="1947.54" y="1231.4" transform="rotate(-90 1947.54 1231.4)" text-anchor="end" font-family="Liberation Sans" font-size="21.5" fill="#595959">69</text><text x="1983.46" y="1231.4" transform="rotate(-90 1983.46 1231.4)" text-anchor="end" font-family="Liberation Sans" font-size="21.5" fill="#595959">73</text><text x="2019.38" y="1231.4" transform="rotate(-90 2019.38 1231.4)" text-anchor="end" font-family="Liberation Sans" font-size="21.5" fill="#595959">77</text><text x="2055.30" y="1231.4" transform="rotate(-90 2055.30 1231.4)" text-anchor="end" font-family="Liberation Sans" font-size="21.5" fill="#595959">81</text><text x="2091.22" y="1231.4" transform="rotate(-90 2091.22 1231.4)" text-anchor="end" font-family="Liberation Sans" font-size="21.5" fill="#595959">85</text><text x="2127.14" y="1231.4" transform="rotate(-90 2127.14 1231.4)" text-anchor="end" font-family="Liberation Sans" font-size="21.5" fill="#595959">89</text><text x="2163.06" y="1231.4" transform="rotate(-90 2163.06 1231.4)" text-anchor="end" font-family="Liberation Sans" font-size="21.5" fill="#595959">93</text><text x="2198.98" y="1231.4" transform="rotate(-90 2198.98 1231.4)" text-anchor="end" font-family="Liberation Sans" font-size="21.5" fill="#595959">97</text><text x="1738.5" y="840.3" text-anchor="middle" font-family="Liberation Sans" font-size="33.3" letter-spacing="0.4" fill="#595959">Empirical rule: 2 s.d.</text><rect x="1672" y="1287.4" width="12.8" height="12.8" fill="#5b9bd5"/><text x="1691.5" y="1300.8" font-family="Liberation Sans" font-size="22" fill="#595959">P(x)</text><rect x="1745.2" y="1287.4" width="13.8" height="12.8" fill="#ed7d31"/><text x="1764.5" y="1300.8" font-family="Liberation Sans" font-size="22" fill="#595959">2 s.d.</text></svg>
<div class="a" style="left:0;top:150px;width:2457px;height:50px;background:#f0f0f0"></div>
<svg class="a" style="left:0;top:0" width="2494" height="202"><line x1="344.5" y1="166" x2="344.5" y2="200" stroke="#dadada" stroke-width="1"/><line x1="597.5" y1="166" x2="597.5" y2="200" stroke="#dadada" stroke-width="1"/><line x1="760.5" y1="166" x2="760.5" y2="200" stroke="#dadada" stroke-width="1"/><line x1="923.5" y1="166" x2="923.5" y2="200" stroke="#dadada" stroke-width="1"/><line x1="1086.5" y1="166" x2="1086.5" y2="200" stroke="#dadada" stroke-width="1"/><line x1="1222.5" y1="166" x2="1222.5" y2="200" stroke="#dadada" stroke-width="1"/><line x1="1358.5" y1="166" x2="1358.5" y2="200" stroke="#dadada" stroke-width="1"/><line x1="1494.5" y1="166" x2="1494.5" y2="200" stroke="#dadada" stroke-width="1"/><line x1="1630.5" y1="166" x2="1630.5" y2="200" stroke="#dadada" stroke-width="1"/><line x1="1766.5" y1="166" x2="1766.5" y2="200" stroke="#dadada" stroke-width="1"/><line x1="1902.5" y1="166" x2="1902.5" y2="200" stroke="#dadada" stroke-width="1"/><line x1="2038.5" y1="166" x2="2038.5" y2="200" stroke="#dadada" stroke-width="1"/><line x1="2174.5" y1="166" x2="2174.5" y2="200" stroke="#dadada" stroke-width="1"/><line x1="2310.5" y1="166" x2="2310.5" y2="200" stroke="#dadada" stroke-width="1"/><line x1="2446.5" y1="166" x2="2446.5" y2="200" stroke="#dadada" stroke-width="1"/><polygon points="50.5,167 50.5,197 20.5,197" fill="#dcdcdc"/><defs><linearGradient id="hl" x1="0" x2="1"><stop offset="0" stop-color="#f0f0f0"/><stop offset="1" stop-color="#a9a9a9"/></linearGradient></defs><rect x="0" y="200" width="54" height="1" fill="url(#hl)"/><rect x="53" y="200" width="2404" height="1" fill="#a9a9a9"/></svg>
<div class="ch" style="left:54px;width:290px">A</div>
<div class="ch" style="left:344px;width:253px">B</div>
<div class="ch" style="left:597px;width:163px">C</div>
<div class="ch" style="left:760px;width:163px">D</div>
<div class="ch" style="left:923px;width:163px">E</div>
<div class="ch" style="left:1086px;width:136px">F</div>
<div class="ch" style="left:1222px;width:136px">G</div>
<div class="ch" style="left:1358px;width:136px">H</div>
<div class="ch" style="left:1494px;width:136px">I</div>
<div class="ch" style="left:1630px;width:136px">J</div>
<div class="ch" style="left:1766px;width:136px">K</div>
<div class="ch" style="left:1902px;width:136px">L</div>
<div class="ch" style="left:2038px;width:136px">M</div>
<div class="ch" style="left:2174px;width:136px">N</div>
<div class="ch" style="left:2310px;width:136px">O</div>
<svg class="a" style="left:0;top:0" width="60" height="1202"><defs><linearGradient id="rl" x1="0" x2="1"><stop offset="0" stop-color="#f0f0f0"/><stop offset="0.6" stop-color="#dedede"/><stop offset="1" stop-color="#dedede"/></linearGradient></defs><rect x="0" y="238" width="53" height="1" fill="url(#rl)"/><rect x="0" y="276" width="53" height="1" fill="url(#rl)"/><rect x="0" y="314" width="53" height="1" fill="url(#rl)"/><rect x="0" y="352" width="53" height="1" fill="url(#rl)"/><rect x="0" y="390" width="53" height="1" fill="url(#rl)"/><rect x="0" y="428" width="53" height="1" fill="url(#rl)"/><rect x="0" y="466" width="53" height="1" fill="url(#rl)"/><rect x="0" y="504" width="53" height="1" fill="url(#rl)"/><rect x="0" y="542" width="53" height="1" fill="url(#rl)"/><rect x="0" y="580" width="53" height="1" fill="url(#rl)"/><rect x="0" y="618" width="53" height="1" fill="url(#rl)"/><rect x="0" y="656" width="53" height="1" fill="url(#rl)"/><rect x="0" y="694" width="53" height="1" fill="url(#rl)"/><rect x="0" y="732" width="53" height="1" fill="url(#rl)"/><rect x="0" y="770" width="53" height="1" fill="url(#rl)"/><rect x="0" y="808" width="53" height="1" fill="url(#rl)"/><rect x="0" y="846" width="53" height="1" fill="url(#rl)"/><rect x="0" y="884" width="53" height="1" fill="url(#rl)"/><rect x="0" y="922" width="53" height="1" fill="url(#rl)"/><rect x="0" y="960" width="53" height="1" fill="url(#rl)"/><rect x="0" y="998" width="53" height="1" fill="url(#rl)"/><rect x="0" y="1036" width="53" height="1" fill="url(#rl)"/><rect x="0" y="1074" width="53" height="1" fill="url(#rl)"/><rect x="0" y="1112" width="53" height="1" fill="url(#rl)"/><rect x="0" y="1150" width="53" height="1" fill="url(#rl)"/><rect x="0" y="1188" width="53" height="1" fill="url(#rl)"/><rect x="0" y="1226" width="53" height="1" fill="url(#rl)"/><rect x="53" y="200" width="1" height="1002" fill="#a9a9a9"/><rect x="53.5" y="200.5" width="2" height="2" fill="#222"/></svg>
<div class="rh" style="top:201px">1</div>
<div class="rh" style="top:239px">2</div>
<div class="rh" style="top:277px">3</div>
<div class="rh" style="top:315px">4</div>
<div class="rh" style="top:353px">5</div>
<div class="rh" style="top:391px">6</div>
<div class="rh" style="top:429px">7</div>
<div class="rh" style="top:467px">8</div>
<div class="rh" style="top:505px">9</div>
<div class="rh" style="top:543px">10</div>
<div class="rh" style="top:581px">11</div>
<div class="rh" style="top:619px">12</div>
<div class="rh" style="top:657px">13</div>
<div class="rh" style="top:695px">14</div>
<div class="rh" style="top:733px">15</div>
<div class="rh" style="top:771px">16</div>
<div class="rh" style="top:809px">17</div>
<div class="rh" style="top:847px">18</div>
<div class="rh" style="top:885px">19</div>
<div class="rh" style="top:923px">20</div>
<div class="rh" style="top:961px">21</div>
<div class="rh" style="top:999px">22</div>
<div class="rh" style="top:1037px">23</div>
<div class="rh" style="top:1075px">24</div>
<div class="rh" style="top:1113px">25</div>
<div class="rh" style="top:1151px">26</div>
<div class="rh" style="top:1189px">27</div>
<div class="a" style="left:2460px;top:163px;width:34px;height:1042px;background:#f6f6f6;border-radius:17px"></div>
<svg class="a" style="left:2460px;top:160px" width="34" height="1050"><path d="M9 26.5 L17 13.5 L25 26.5 Z" fill="#707070" stroke="#707070" stroke-width="2.5" stroke-linejoin="round"/><rect x="9" y="37" width="16" height="190.5" rx="8" fill="#707070"/><path d="M9 1022 L17 1034.5 L25 1022 Z" fill="#707070" stroke="#707070" stroke-width="2.5" stroke-linejoin="round"/></svg>
<div class="a" style="left:205px;top:1202px;width:311px;height:14px;background:#fff"></div>
<div class="a" style="left:0;top:1202px;width:215px;height:64px;background:#f0f0f0;border-top-right-radius:10px"></div>
<div class="a" style="left:506px;top:1202px;width:1988px;height:64px;background:#f0f0f0;border-top-left-radius:10px"></div>
<div class="a" style="left:205px;top:1215px;width:311px;height:51px;background:#f0f0f0"></div>
<div class="a" style="left:0;top:1266px;width:2494px;height:1px;background:#fdfdfd"></div>
<div class="a" style="left:0;top:1267px;width:2494px;height:3px;background:#f5f5f5"></div>
<div class="a" style="left:1900px;top:1268px;width:80px;height:2px;background:#dcdcdc"></div>
<div class="a" style="left:214px;top:1202px;width:293px;height:57px;background:#fff;border:1px solid #dcdcdc;border-top:none;border-radius:0 0 11px 11px;box-shadow:0 1px 2px rgba(0,0,0,.12)"></div>
<div class="tab" style="left:231px;width:270px;top:1200.5px;font-size:28.5px;letter-spacing:0.5px;-webkit-text-stroke:0.75px #262626">empirical-rule-finish</div>
<div class="a" style="left:232px;top:1248px;width:257px;height:4px;background:#107c41"></div>
<div class="tab" style="left:542px;top:1207px;letter-spacing:0.5px">normal-distributions</div>
<div class="tab" style="left:852px;top:1207px;letter-spacing:0.5px">roulette-dist</div>
<div class="tab" style="left:1062px;top:1207px;letter-spacing:0.5px">roulette-dist-finish</div>
<svg class="a" style="left:0;top:1195px" width="1540" height="75"><line x1="513.5" y1="21" x2="513.5" y2="57" stroke="#c8c8c8" stroke-width="1.5"/><line x1="824.5" y1="21" x2="824.5" y2="57" stroke="#c8c8c8" stroke-width="1.5"/><line x1="1033" y1="21" x2="1033" y2="57" stroke="#c8c8c8" stroke-width="1.5"/><line x1="1322" y1="21" x2="1322" y2="57" stroke="#c8c8c8" stroke-width="1.5"/><path d="M52.5 28.5 L43 37.5 L52.5 46.5" fill="none" stroke="#333" stroke-width="1.9"/><path d="M107.5 28.5 L117 37.5 L107.5 46.5" fill="none" stroke="#333" stroke-width="1.9"/><circle cx="167.3" cy="37.5" r="3.4" fill="#333"/><circle cx="175" cy="37.5" r="3.4" fill="#333"/><circle cx="182.7" cy="37.5" r="3.4" fill="#333"/><circle cx="1369.3" cy="37.5" r="3.4" fill="#333"/><circle cx="1377" cy="37.5" r="3.4" fill="#333"/><circle cx="1384.7" cy="37.5" r="3.4" fill="#333"/><path d="M1441 27 V49 M1430 38 H1452" stroke="#333" stroke-width="2.2"/><rect x="1504" y="28.3" width="4.6" height="4.6" fill="#333"/><rect x="1504" y="35.8" width="4.6" height="4.6" fill="#333"/><rect x="1504" y="43.3" width="4.6" height="4.6" fill="#333"/></svg>
<div class="a" style="left:1537px;top:1216px;width:922px;height:34px;background:#f6f6f6;border-radius:17px"></div>
<svg class="a" style="left:1537px;top:1210px" width="922" height="45"><path d="M24 22 L12.5 14.5 L12.5 29.5 Z" fill="#707070" stroke="#707070" stroke-width="2.5" stroke-linejoin="round" transform="rotate(180 18.5 22)"/><rect x="35" y="14.8" width="534.6" height="15.7" rx="7.8" fill="#707070"/><path d="M900.5 14.5 L912 22 L900.5 29.5 Z" fill="#707070" stroke="#707070" stroke-width="2.5" stroke-linejoin="round"/></svg>
</body></html>
